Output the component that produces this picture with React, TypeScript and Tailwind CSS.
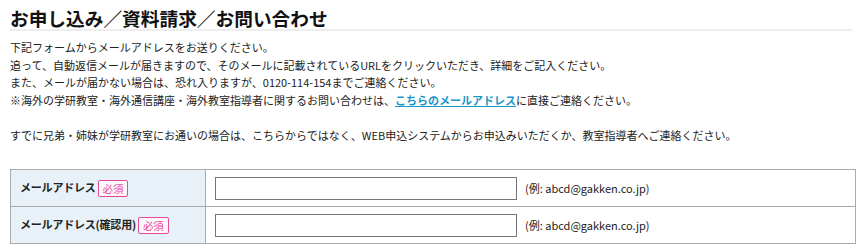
import React from 'react';

const rows = [
  { label: 'メールアドレス', name: 'email' },
  { label: 'メールアドレス(確認用)', name: 'email_confirm' },
];

function RequiredBadge() {
  return (
    <span className="ml-[2px] inline-block h-[17px] rounded-[2px] border border-[#e8479a] bg-[#fff8fb] px-[4px] align-middle text-[10.5px] font-normal leading-[15px] text-[#e8479a]">
      必須
    </span>
  );
}

export default function App() {
  return (
    <div
      className="w-[862px] bg-white px-[10px] text-[11px] text-[#222]"
      style={{ fontFamily: '"Noto Sans CJK JP", "Noto Sans", sans-serif' }}
    >
      {/* 見出し */}
      <h1 className="border-b-2 border-[#eeeeee] pt-[7px] text-[18.7px] font-bold leading-[22px] text-[#111]">
        お申し込み／資料請求／お問い合わせ
      </h1>

      {/* 説明文 */}
      <p className="mt-[8px] leading-[17.5px]">
        下記フォームからメールアドレスをお送りください。
        <br />
        追って、自動返信メールが届きますので、そのメールに記載されているURLをクリックいただき、詳細をご記入ください。
        <br />
        また、メールが届かない場合は、恐れ入りますが、0120-114-154までご連絡ください。
        <br />
        ※海外の学研教室・海外通信講座・海外教室指導者に関するお問い合わせは、
        <a href="#" className="font-bold text-[#1a96c8] underline">
          こちらのメールアドレス
        </a>
        に直接ご連絡ください。
        <br />
        <br />
        すでに兄弟・姉妹が学研教室にお通いの場合は、こちらからではなく、WEB申込システムからお申込みいただくか、教室指導者へご連絡ください。
      </p>

      {/* 入力フォーム */}
      <table className="mt-[25px] w-[846px] border-collapse">
        <tbody>
          {rows.map(row => (
            <tr key={row.name} className="h-[37px]">
              <th className="w-[195px] border border-[#aaaaaa] bg-[#e8f1f7] px-[9px] text-left font-bold tracking-[-0.2px]">
                {row.label}
                <RequiredBadge />
              </th>
              <td className="border border-[#aaaaaa] px-[9px]">
                <div className="flex items-center gap-[8px]">
                  <input
                    type="text"
                    name={row.name}
                    className="h-[23px] w-[302px] border border-[#767676] bg-white px-1"
                  />
                  <span>(例: abcd@gakken.co.jp)</span>
                </div>
              </td>
            </tr>
          ))}
        </tbody>
      </table>
    </div>
  );
}
